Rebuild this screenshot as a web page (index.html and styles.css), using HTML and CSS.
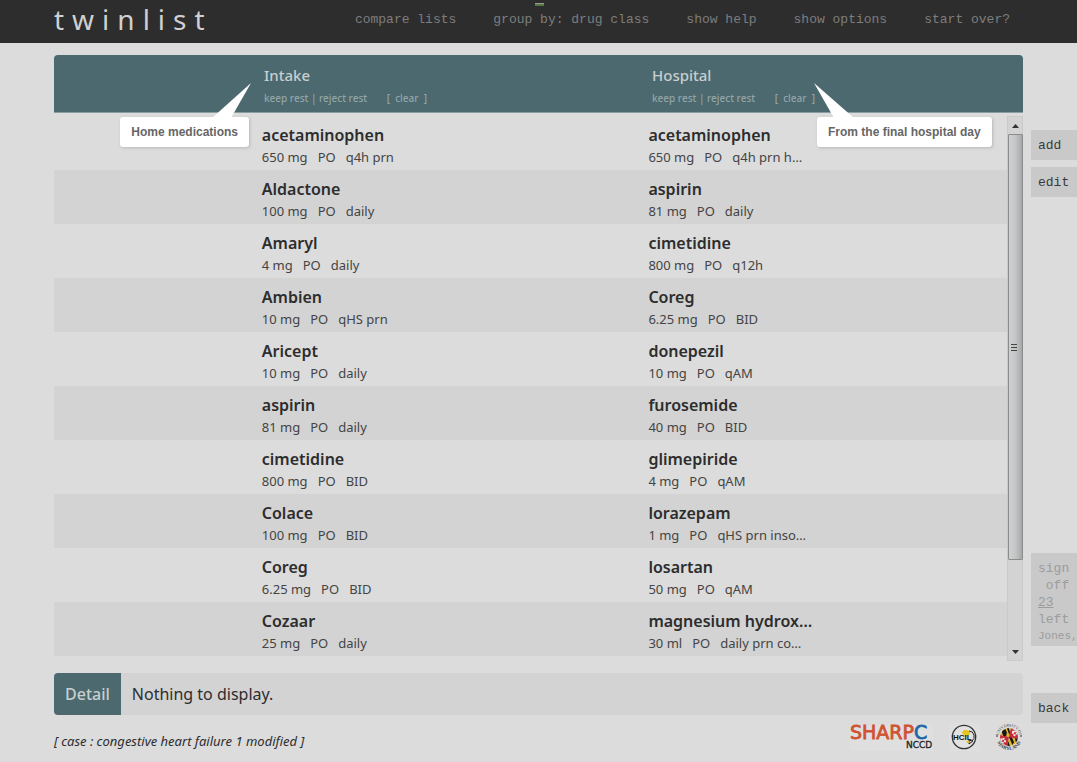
FILE: index.html
```html
<!DOCTYPE html>
<html lang="en">
<head>
<meta charset="utf-8">
<title>twinlist</title>
<link rel="stylesheet" href="styles.css">
</head>
<body>
<header class="topbar">
  <h1 class="brand">twinlist</h1>
  <nav class="menu">
    <button type="button">compare lists</button>
    <button type="button" class="marked">group by: drug class</button>
    <button type="button">show help</button>
    <button type="button">show options</button>
    <button type="button">start over?</button>
  </nav>
</header>
<div class="page">
  <main class="content">
    <section class="lists">
      <div class="list-head">
        <div class="head-cell intake">
          <h2>Intake</h2>
          <div class="actions"><a href="#">keep rest</a> | <a href="#">reject rest</a> <a href="#" class="clear">[&nbsp; clear &nbsp;]</a></div>
          <div class="callout callout-left">Home medications
            <svg class="tail" viewBox="0 0 40 35" width="40" height="35"><path d="M0 35 39 0 19 35z" fill="#fff"/></svg>
          </div>
        </div>
        <div class="head-cell hospital">
          <h2>Hospital</h2>
          <div class="actions"><a href="#">keep rest</a> | <a href="#">reject rest</a> <a href="#" class="clear">[&nbsp; clear &nbsp;]</a></div>
          <div class="callout callout-right">From the final hospital day
            <svg class="tail" viewBox="0 0 40 35" width="40" height="35"><path d="M0 0 40 35H20z" fill="#fff"/></svg>
          </div>
        </div>
      </div>
      <div class="list-body">
        <div class="rows">
          <div class="row"><div class="drug intake"><h3>acetaminophen</h3><p><span>650 mg</span><span>PO</span><span>q4h prn</span></p></div><div class="drug hospital"><h3>acetaminophen</h3><p><span>650 mg</span><span>PO</span><span>q4h prn h…</span></p></div></div>
          <div class="row"><div class="drug intake"><h3>Aldactone</h3><p><span>100 mg</span><span>PO</span><span>daily</span></p></div><div class="drug hospital"><h3>aspirin</h3><p><span>81 mg</span><span>PO</span><span>daily</span></p></div></div>
          <div class="row"><div class="drug intake"><h3>Amaryl</h3><p><span>4 mg</span><span>PO</span><span>daily</span></p></div><div class="drug hospital"><h3>cimetidine</h3><p><span>800 mg</span><span>PO</span><span>q12h</span></p></div></div>
          <div class="row"><div class="drug intake"><h3>Ambien</h3><p><span>10 mg</span><span>PO</span><span>qHS prn</span></p></div><div class="drug hospital"><h3>Coreg</h3><p><span>6.25 mg</span><span>PO</span><span>BID</span></p></div></div>
          <div class="row"><div class="drug intake"><h3>Aricept</h3><p><span>10 mg</span><span>PO</span><span>daily</span></p></div><div class="drug hospital"><h3>donepezil</h3><p><span>10 mg</span><span>PO</span><span>qAM</span></p></div></div>
          <div class="row"><div class="drug intake"><h3>aspirin</h3><p><span>81 mg</span><span>PO</span><span>daily</span></p></div><div class="drug hospital"><h3>furosemide</h3><p><span>40 mg</span><span>PO</span><span>BID</span></p></div></div>
          <div class="row"><div class="drug intake"><h3>cimetidine</h3><p><span>800 mg</span><span>PO</span><span>BID</span></p></div><div class="drug hospital"><h3>glimepiride</h3><p><span>4 mg</span><span>PO</span><span>qAM</span></p></div></div>
          <div class="row"><div class="drug intake"><h3>Colace</h3><p><span>100 mg</span><span>PO</span><span>BID</span></p></div><div class="drug hospital"><h3>lorazepam</h3><p><span>1 mg</span><span>PO</span><span>qHS prn inso…</span></p></div></div>
          <div class="row"><div class="drug intake"><h3>Coreg</h3><p><span>6.25 mg</span><span>PO</span><span>BID</span></p></div><div class="drug hospital"><h3>losartan</h3><p><span>50 mg</span><span>PO</span><span>qAM</span></p></div></div>
          <div class="row"><div class="drug intake"><h3>Cozaar</h3><p><span>25 mg</span><span>PO</span><span>daily</span></p></div><div class="drug hospital"><h3>magnesium hydrox…</h3><p><span>30 ml</span><span>PO</span><span>daily prn co…</span></p></div></div>
        </div>
        <div class="scrollbar">
          <svg width="7" height="4" viewBox="0 0 7 4"><path d="M0 4 3.500 0 7 4z" fill="#333"/></svg>
          <div class="track"><div class="thumb"><i></i><i></i><i></i></div></div>
          <svg width="7" height="4" viewBox="0 0 7 4"><path d="M0 0h7L3.500 4z" fill="#333"/></svg>
        </div>
      </div>
    </section>
    <section class="detail">
      <h2>Detail</h2>
      <p>Nothing to display.</p>
    </section>
    <footer class="footer">
      <p>[ case : congestive heart failure 1 modified ]</p>
      <div class="logos">
        <svg width="84" height="30" viewBox="0 0 84 30" role="img" aria-label="SHARPC NCCD">
          <rect y="3" width="83" height="26" fill="#dfdfdf"/>
          <g font-family="DejaVu Sans, sans-serif">
            <text x="0" y="17" font-size="19" fill="#cf5331" stroke="#cf5331" stroke-width=".8">SHARP<tspan fill="#1f68a5" stroke="#1f68a5">C</tspan></text>
            <text x="56" y="26" font-size="9" fill="#222" stroke="#222" stroke-width=".3">NCCD</text>
          </g>
        </svg>
        <svg width="31" height="28" viewBox="0 0 31 28" role="img" aria-label="HCIL">
          <rect width="31" height="28" fill="#dfdfdf"/>
          <circle cx="15" cy="14" r="11.700" fill="#e2e2e2" stroke="#333" stroke-width="1.300"/>
          <path d="M13 10q1-4 5-3 3 1 3 4l-4 3z" fill="#e7c51b"/>
          <text x="4" y="17" font-size="8" font-weight="700" font-family="Liberation Sans, sans-serif" fill="#111">HCIL</text>
          <path d="M20 8q4 0 5 4 1 4-2 6l-3-1m0 0v4m0 0 4-3" fill="none" stroke="#222" stroke-width="1"/>
          <path d="m17 18 3 0 0 2-2 0z" fill="#e7c51b"/>
        </svg>
        <svg width="28" height="28" viewBox="0 0 28 28" role="img" aria-label="University of Maryland">
          <defs>
            <path id="arc-top" d="M3.500 14a10.500 10.500 0 0 1 21 0"/>
            <path id="arc-bottom" d="M1 14a13 13 0 0 0 26 0"/>
            <clipPath id="globe"><circle cx="14" cy="14" r="9"/></clipPath>
          </defs>
          <g clip-path="url(#globe)">
            <g transform="rotate(12 14 14)">
              <path fill="#e0b52a" d="M3 3h11v11H3zM14 14h11v11H14z"/>
              <path fill="#c82c38" d="M14 3h11v11H14zM3 14h11v11H3z"/>
              <path fill="#171717" d="m5 9 3-3 3 4v4H8zM9 4h2l3 5v3zM14 14h3l3 4-1 3zM20 14h3v4h-1zM14 18l3 5h-3z"/>
              <path fill="#e8e8e8" d="M16 7h2V6h2v2h2v2h-2v2h-2v-2h-2zM6 17h2v-1h2v2h2v2h-2v2H8v-2H6z"/>
              <path fill="#c82c38" d="M18 8h2v2h-2zM8 18h2v2H8z"/>
            </g>
          </g>
          <g font-family="Liberation Serif, serif" font-size="4" fill="#444" text-anchor="middle">
            <text><textPath href="#arc-top" startOffset="50%">UNIVERSITY OF</textPath></text>
            <text font-size="5" font-weight="700"><textPath href="#arc-bottom" startOffset="50%">MARYLAND</textPath></text>
          </g>
          <path d="M1 13h2M25 13h2" stroke="#333"/>
        </svg>
      </div>
    </footer>
  </main>
  <aside class="side">
    <button type="button">add</button>
    <button type="button">edit</button>
    <button type="button" class="sign" disabled>sign<br>&nbsp;off<br><u>23</u><br>left<br><small>Jones,</small></button>
    <button type="button">back</button>
  </aside>
</div>
</body>
</html>
```
FILE: styles.css
```css
* { box-sizing: border-box; }
body {
  margin: 0;
  min-height: 100vh;
  background: #dcdcdc;
  color: #2d2d2d;
  font-family: "Noto Sans", "Open Sans", sans-serif;
  overflow-x: hidden;
}
h1, h2, h3, p { margin: 0; font-weight: 400; }
button { border: 0; padding: 0; font: 13px/16px "Liberation Mono", monospace; cursor: pointer; }
a { color: inherit; text-decoration: none; }
svg { overflow: visible; }

.topbar {
  height: 43px;
  padding: 0 67px 0 54px;
  background: #2d2d2d;
  display: flex;
  justify-content: space-between;
  align-items: flex-start;
}
.brand { color: #d0d0d0; font-size: 28px; line-height: 38px; letter-spacing: 8px; }
.menu { display: flex; gap: 37px; padding-top: 12px; }
.menu button { background: none; color: #7d7d7d; white-space: nowrap; }
.marked { position: relative; }
.marked::before {
  content: "";
  position: absolute;
  left: 42px;
  top: -9px;
  width: 9px;
  height: 2px;
  background: #587842;
  border-top: 1px solid #999;
}

.page { display: flex; gap: 8px; padding-left: 54px; }
.content { flex: 1; min-width: 0; padding-top: 12px; }
.list-head {
  display: grid;
  grid-template-columns: 210fr 388fr 371fr;
  height: 58px;
  margin-bottom: 3px;
  padding-top: 9px;
  background: #4b696e;
  border-bottom: 1px solid #8b9da0;
  border-radius: 4px 4px 0 0;
}
.head-cell { position: relative; color: #c8cfd0; }
.intake { grid-column: 2; }
.hospital { grid-column: 3; }
.head-cell h2 { font-size: 15px; line-height: 22px; font-weight: 500; }
.actions { color: #94a5a8; font-size: 10px; line-height: 24px; font-weight: 500; white-space: nowrap; }
.clear { margin-left: 17px; }
.callout {
  position: absolute;
  z-index: 1;
  top: 53px;
  padding: 7px 11px;
  background: #fff;
  border-radius: 3px;
  box-shadow: 1px 1px 3px #9998;
  color: #666;
  font: 700 12px/16px "Liberation Sans", sans-serif;
  white-space: nowrap;
}
.callout-left { right: calc(100% + 15px); }
.callout-right { left: 165px; }
.tail { position: absolute; top: -34px; }
.callout-left .tail { right: -3px; }
.callout-right .tail { left: -3px; }

.list-body { display: flex; }
.rows { flex: 1; padding-bottom: 5px; }
.row {
  display: grid;
  grid-template-columns: 208fr 387fr 359fr;
  height: 54px;
  padding-top: 8px;
}
.row:nth-child(even) { background: #d3d3d3; }
.drug h3 { font-size: 16px; line-height: 22px; font-weight: 600; }
.drug p { display: flex; gap: 10px; color: #444; font-size: 13px; line-height: 22px; white-space: nowrap; }
.scrollbar {
  width: 16px;
  padding: 7px 0 6px;
  display: flex;
  flex-direction: column;
  align-items: center;
  background: #d3d3d3;
  border: 1px solid #cacaca;
}
.track { flex: 1; width: 15px; padding: 6px 0 90px; display: flex; }
.thumb {
  flex: 1;
  display: flex;
  flex-direction: column;
  align-items: center;
  justify-content: center;
  gap: 2px;
  padding-right: 2px;
  border: 1px solid #8b8b8b;
  border-radius: 1px;
  background: linear-gradient(90deg, #d0d0d0, #c4c5c6 50%, #a6a7a9);
}
.thumb i { width: 6px; height: 1px; background: #444; }

.detail {
  display: flex;
  margin-top: 12px;
  height: 42px;
  line-height: 42px;
  background: #d3d3d3;
  border-radius: 4px;
  overflow: hidden;
}
.detail h2 { padding: 0 11px; background: #4b696e; color: #c8cfd0; font-size: 16px; font-weight: 500; }
.detail p { padding-left: 11px; font-size: 16px; }
.footer { display: flex; justify-content: space-between; padding-top: 8px; }
.footer p { font-size: 13px; font-style: italic; line-height: 36px; }
.logos { display: flex; height: 28px; gap: 15px; align-items: center; }

.side { width: 46px; padding-top: 87px; display: flex; flex-direction: column; gap: 7px; }
.side button {
  min-height: 30px;
  padding: 2px 0 0 7px;
  background: #c9c9c9;
  color: #3a3a3a;
  text-align: left;
}
.side .sign { margin: 349px 0 40px; padding: 7px 0 2px 7px; line-height: 17px; color: #9c9c9c; }
.sign small { display: block; font-size: 11px; line-height: 16px; }
```
